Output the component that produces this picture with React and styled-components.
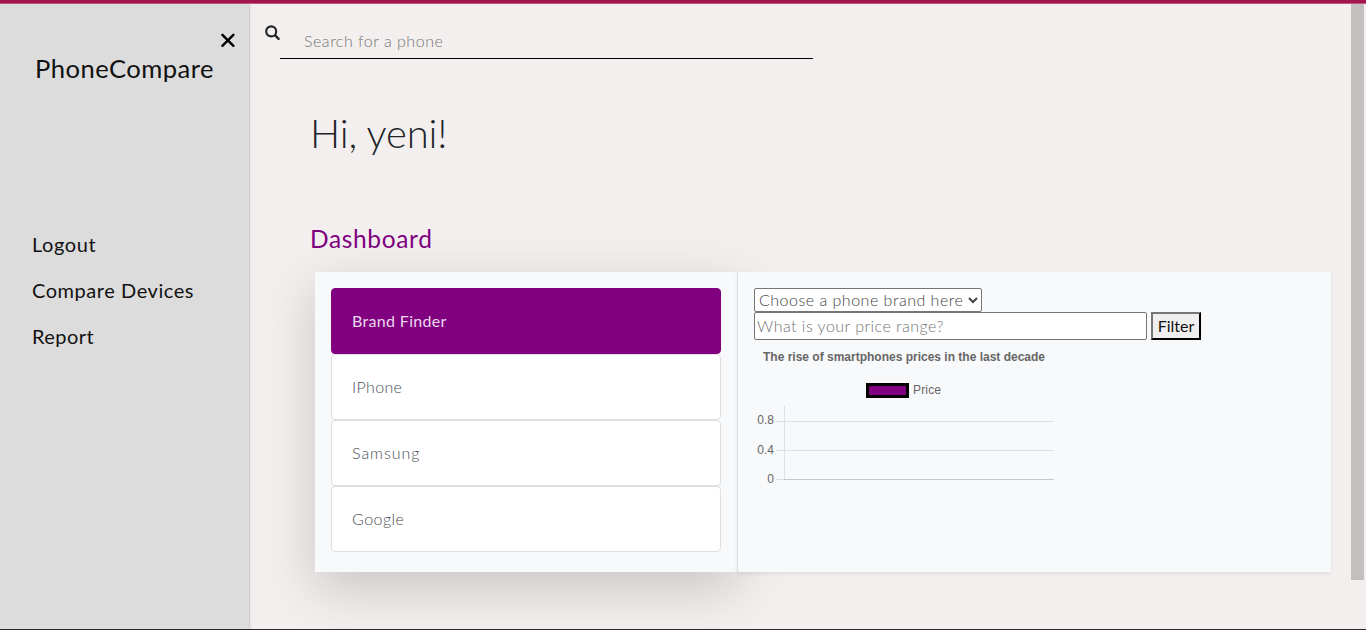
import React from "react";
import styled, { createGlobalStyle } from "styled-components";

const GlobalStyle = createGlobalStyle`
  *, *::before, *::after { box-sizing: border-box; }
  body {
    margin: 0;
    overflow: hidden;
    color: #212529;
    background: #f3efee;
    font: 300 16px/1.5 Lato, "Open Sans", sans-serif;
  }
`;

const Page = styled.div`
  display: flex;
  flex-direction: column;
  height: 630px;
  border-top: 3px solid #a3154f;
  border-bottom: 1px solid #33272b;
`;

const Accent = styled.div`
  flex: none;
  height: 1px;
  background: #c0587f;
`;

const Body = styled.div`
  flex: 1;
  display: flex;
  min-height: 0;
`;

const Sidebar = styled.aside`
  position: relative;
  z-index: 1;
  flex: none;
  display: flex;
  flex-direction: column;
  width: 250px;
  padding-top: 29px;
  background: #dcdcdc;
  border-right: 1px solid #d0d0d0;
  box-shadow: 0 2px 4px rgba(0, 0, 0, 0.075);
  color: #111;
  font-weight: 400;
`;

const CloseButton = styled.button`
  align-self: flex-end;
  margin-right: 14px;
  padding: 0;
  width: 15px;
  height: 15px;
  border: 0;
  background: none;
  svg { display: block; }
`;

const Label = styled.span`
  letter-spacing: ${(p) => p.$spacing || 0}px;
  white-space: nowrap;
`;

const Brand = styled.div`
  margin: 1px 0 0 35px;
  font-size: 25.6px;
  line-height: 38px;
`;

const Nav = styled.nav`
  display: flex;
  flex-direction: column;
  gap: 16px;
  margin: 142px 0 0 32px;
`;

const NavLink = styled.a`
  color: #111;
  font-size: 20px;
  line-height: 30px;
`;

const Main = styled.main`
  flex: 1;
  min-width: 0;
  display: flex;
  flex-direction: column;
`;

const SearchBar = styled.div`
  display: flex;
  align-items: flex-start;
  height: 55px;
  padding-left: 15px;
  svg { flex: none; margin: 21px 0 0; }
`;

const SearchField = styled.input`
  width: 533px;
  height: 55px;
  padding: 18px 0 0 24px;
  border: 0;
  border-bottom: 1px solid #000;
  outline: 0;
  background: transparent;
  font: inherit;
  letter-spacing: 0.52px;
  &::placeholder { color: #757575; opacity: 1; }
`;

const Greeting = styled.h1`
  margin: 50px 0 0 60px;
  font-size: 40px;
  font-weight: 300;
  line-height: 48px;
`;

const SectionTitle = styled.h2`
  margin: 67px 0 0 60px;
  color: purple;
  font-size: 24.5px;
  font-weight: 400;
  line-height: 30px;
`;

const Dashboard = styled.section`
  display: flex;
  height: 300px;
  width: 1016px;
  margin: 18px 0 0 65px;
`;

const BrandPanel = styled.div`
  width: 422px;
  padding: 16px;
  background: #f8f9fb;
  box-shadow: 0 16px 48px rgba(0, 0, 0, 0.175);
`;

const BrandItem = styled.div`
  display: flex;
  align-items: center;
  height: 66px;
  padding-left: 20px;
  border: 1px solid ${(p) => (p.$active ? "purple" : "#dfdfdf")};
  border-radius: 4px;
  background: ${(p) => (p.$active ? "purple" : "#fff")};
  color: ${(p) => (p.$active ? "#ecd9ec" : "#495057")};
  font-weight: ${(p) => (p.$active ? 400 : 300)};
`;

const PricePanel = styled.div`
  position: relative;
  flex: 1;
  display: flex;
  flex-direction: column;
  align-items: flex-start;
  padding: 16px;
  border-left: 1px solid #dadcdf;
  background: #f8f9fb;
  box-shadow: 0 2px 4px rgba(0, 0, 0, 0.075);
`;

const BrandSelect = styled.select`
  width: 228px;
  height: 24px;
  padding: 0 0 2px;
  border: 1px solid #767676;
  border-radius: 2px;
  background-color: #fff;
  color: #444;
  font: inherit;
  letter-spacing: 0.5px;
`;

const FilterRow = styled.div`
  display: flex;
  gap: 4px;
`;

const PriceField = styled.input`
  width: 393px;
  height: 28px;
  padding: 0 2px 2px;
  border: 1px solid #767676;
  border-radius: 2px;
  font: inherit;
  letter-spacing: 0.47px;
  &::placeholder { color: #757575; opacity: 1; }
`;

const FilterButton = styled.button`
  width: 50px;
  height: 28px;
  padding: 0;
  border: 2px outset #767676;
  border-color: #767676 #212121 #212121 #767676;
  background: #efefef;
  color: #111;
  font: 400 16px/22px Lato, sans-serif;
`;

const Chart = styled.svg`
  display: block;
  font-family: "Liberation Sans", Arial, sans-serif;
  font-size: 12px;
  fill: #666;
`;

const ScrollTrack = styled.div`
  flex: none;
  width: 15px;
  padding-right: 2px;
`;

const ScrollThumb = styled.div`
  height: 576px;
  background: #c1c0be;
`;

const links = [
  ["Logout", 0.58],
  ["Compare Devices", 0.55],
  ["Report", 0.45],
];

const brands = [
  ["Brand Finder", 0.33],
  ["IPhone", 0.35],
  ["Samsung", 0.95],
  ["Google", 0.48],
];

function PriceChart() {
  return (
    <Chart width="300" height="150" viewBox="0 0 300 150">
      <text x="9" y="21" fontWeight="bold" textLength="282">The rise of smartphones prices in the last decade</text>
      <rect x="113.5" y="44.5" width="40" height="12" fill="purple" stroke="#000" strokeWidth="3" />
      <text x="159" y="54" textLength="28">Price</text>
      <path d="M22 81.5H300M22 110.5H300M22 139.5H30M30.5 66V140" fill="none" stroke="#dfe0e2" />
      <path d="M30 139.5H300" stroke="#c6c7c9" />
      <g textAnchor="end">
        <text x="20" y="84">0.8</text>
        <text x="20" y="114">0.4</text>
        <text x="20" y="143">0</text>
      </g>
    </Chart>
  );
}

export default function App() {
  return (
    <Page>
      <GlobalStyle />
      <Accent />
      <Body>
        <Sidebar>
          <CloseButton aria-label="Close">
            <svg width="15" height="15" viewBox="0 0 15 15" fill="none" stroke="#000" strokeWidth="2.4" strokeLinecap="round">
              <path d="M2.4 1.8L13.4 12.8M13.4 1.8L2.4 12.8" />
            </svg>
          </CloseButton>
          <Brand><Label $spacing={0.44}>PhoneCompare</Label></Brand>
          <Nav>
            {links.map(([name, spacing]) => (
              <NavLink key={name}><Label $spacing={spacing}>{name}</Label></NavLink>
            ))}
          </Nav>
        </Sidebar>
        <Main>
          <SearchBar>
            <svg width="15" height="15" viewBox="0 0 15 15" fill="none" stroke="#212529" strokeLinecap="round">
              <circle cx="6.2" cy="6.4" r="5" strokeWidth="2.1" />
              <path d="M10.2 10.4L13.6 13.8" strokeWidth="2.4" />
            </svg>
            <SearchField placeholder="Search for a phone" />
          </SearchBar>
          <Greeting><Label $spacing={-0.2}>Hi, yeni!</Label></Greeting>
          <SectionTitle><Label $spacing={0.65}>Dashboard</Label></SectionTitle>
          <Dashboard>
            <BrandPanel>
              {brands.map(([name, spacing], i) => (
                <BrandItem key={name} $active={i === 0}><Label $spacing={spacing}>{name}</Label></BrandItem>
              ))}
            </BrandPanel>
            <PricePanel>
              <BrandSelect><option>Choose a phone brand here</option></BrandSelect>
              <FilterRow>
                <PriceField placeholder="What is your price range?" />
                <FilterButton>Filter</FilterButton>
              </FilterRow>
              <PriceChart />
            </PricePanel>
          </Dashboard>
        </Main>
        <ScrollTrack><ScrollThumb /></ScrollTrack>
      </Body>
    </Page>
  );
}
